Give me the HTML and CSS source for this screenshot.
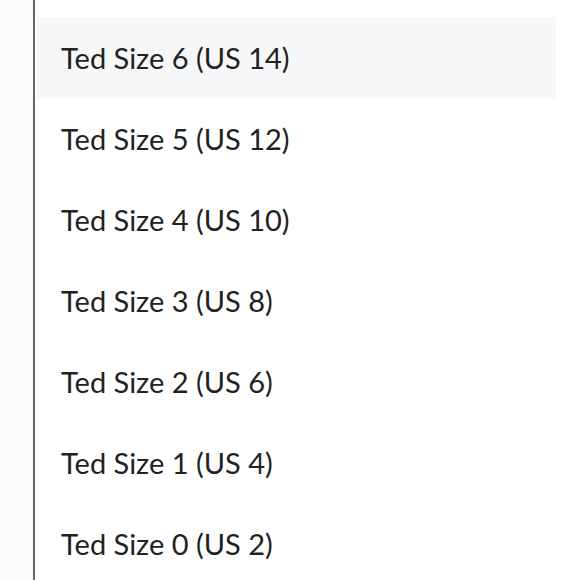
FILE: index.html
```html
<!DOCTYPE html>
<html lang="en">
<head>
    <meta charset="UTF-8">
    <meta name="viewport" content="width=device-width, initial-scale=1.0">
    <title>Sizes</title>
    <link rel="stylesheet" href="styles.css">
</head>
<body>
    <div class="panel">
        <ul class="size-list">
            <li class="size-item active">Ted Size 6 (US 14)</li>
            <li class="size-item">Ted Size 5 (US 12)</li>
            <li class="size-item">Ted Size 4 (US 10)</li>
            <li class="size-item">Ted Size 3 (US 8)</li>
            <li class="size-item">Ted Size 2 (US 6)</li>
            <li class="size-item">Ted Size 1 (US 4)</li>
            <li class="size-item">Ted Size 0 (US 2)</li>
        </ul>
    </div>
</body>
</html>
```

FILE: styles.css
```css
body {
    margin: 0;
    padding: 0;
    background-color: #fbfbfb;
    font-family: Lato, "Open Sans", sans-serif;
    height: 580px;
    overflow: hidden;
}
.panel {
    margin-left: 33px;
    border-left: 2px solid #666;
    height: 100%;
    padding-top: 17px;
    padding-left: 2px;
    background-color: #fff;
}
.size-list {
    list-style: none;
    margin: 0;
    padding: 0;
    width: 519px;
    display: flex;
    flex-direction: column;
}
.size-item {
    height: 81px;
    display: flex;
    align-items: center;
    padding-left: 24px;
    font-size: 29px;
    color: #222;
}
.size-item.active {
    background-color: #f6f7f9;
}
```
